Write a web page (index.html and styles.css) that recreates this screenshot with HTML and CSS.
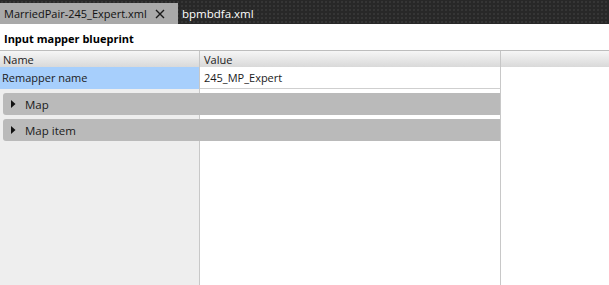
FILE: index.html
```html
<!DOCTYPE html>
<html>
<head>
<meta charset="utf-8">
<link rel="stylesheet" href="styles.css">
</head>
<body>
<div class="tabbar">
  <div class="tab active">
    <span class="tab-label">MarriedPair-245_Expert.xml</span>
    <svg class="close" width="10" height="10" viewBox="0 0 10 10"><path d="M1 1 L9 9 M9 1 L1 9" stroke="#1a1a1a" stroke-width="1.4" fill="none"/></svg>
  </div>
  <div class="tab">
    <span class="tab-label">bpmbdfa.xml</span>
  </div>
</div>
<div class="title">Input mapper blueprint</div>
<div class="header">
  <div class="hcell">Name</div>
  <div class="hcell value">Value</div>
  <div class="hcell last"></div>
</div>
<div class="body">
  <div class="row">
    <div class="cell name selected">Remapper name</div>
    <div class="cell val">245_MP_Expert</div>
  </div>
  <div class="group">
    <svg class="arrow" width="5" height="8" viewBox="0 0 5 8"><path d="M0 0 L4.5 4 L0 8 Z" fill="#111"/></svg>
    <span>Map</span>
  </div>
  <div class="group">
    <svg class="arrow" width="5" height="8" viewBox="0 0 5 8"><path d="M0 0 L4.5 4 L0 8 Z" fill="#111"/></svg>
    <span>Map item</span>
  </div>
</div>
</body>
</html>
```
FILE: styles.css
```css
html, body {
  margin: 0;
  padding: 0;
  height: 100%;
}
body {
  font-family: "Open Sans", "Noto Sans", sans-serif;
  font-size: 11px;
  color: #1b1b1b;
  background: #fff;
  display: flex;
  flex-direction: column;
  overflow: hidden;
}
.tabbar {
  height: 24px;
  flex: none;
  display: flex;
  align-items: flex-end;
  background-color: #282828;
  background-image: radial-gradient(circle, #363636 0.7px, transparent 1px);
  background-size: 4px 4px;
}
.tab {
  height: 21px;
  display: flex;
  align-items: center;
  padding: 0 5px 0 4px;
  color: #fff;
  font-size: 11.5px;
  white-space: nowrap;
}
.tab.active {
  width: 178px;
  box-sizing: border-box;
  background: #a9a9a9;
  color: #111;
  padding-left: 4px;
  font-size: 11px;
}
.tab .close {
  margin-left: auto;
  margin-right: 8px;
  flex: none;
}
.title {
  height: 26px;
  flex: none;
  box-sizing: border-box;
  padding: 7px 0 0 4px;
  font-weight: 700;
  font-size: 11px;
  color: #000;
}
.header {
  flex: none;
  display: grid;
  grid-template-columns: 200px 301px 1fr;
  border-top: 1px solid #bdbdbd;
  height: 16px;
  background: linear-gradient(#f6f6f6, #d9d9d9);
}
.hcell {
  box-sizing: border-box;
  border-right: 1px solid #c6c6c6;
  padding-left: 3px;
  line-height: 17px;
}
.hcell.value {
  padding-left: 4px;
}
.hcell.last {
  border-right: none;
}
.body {
  flex: 1;
  background: linear-gradient(to right, #eeeeee 0 199px, #c8c8c8 199px 200px, #ffffff 200px 500px, #c8c8c8 500px 501px, #ffffff 501px);
}
.row {
  display: grid;
  grid-template-columns: 199px 301px;
  column-gap: 1px;
  height: 22px;
}
.cell {
  line-height: 21px;
}
.cell.selected {
  background: #a7cffc;
  padding-left: 2px;
}
.cell.val {
  background: #fff;
  border-bottom: 1px solid #cfcfcf;
  border-right: 1px solid #c8c8c8;
  padding-left: 4px;
}
.group {
  margin: 4px 0 0 3px;
  width: 497px;
  height: 22px;
  box-sizing: border-box;
  background: #bababa;
  border-radius: 3px 0 0 3px;
  display: flex;
  align-items: center;
  padding-left: 8px;
  font-size: 11.5px;
}
.group .arrow {
  margin-right: 9px;
}
```
